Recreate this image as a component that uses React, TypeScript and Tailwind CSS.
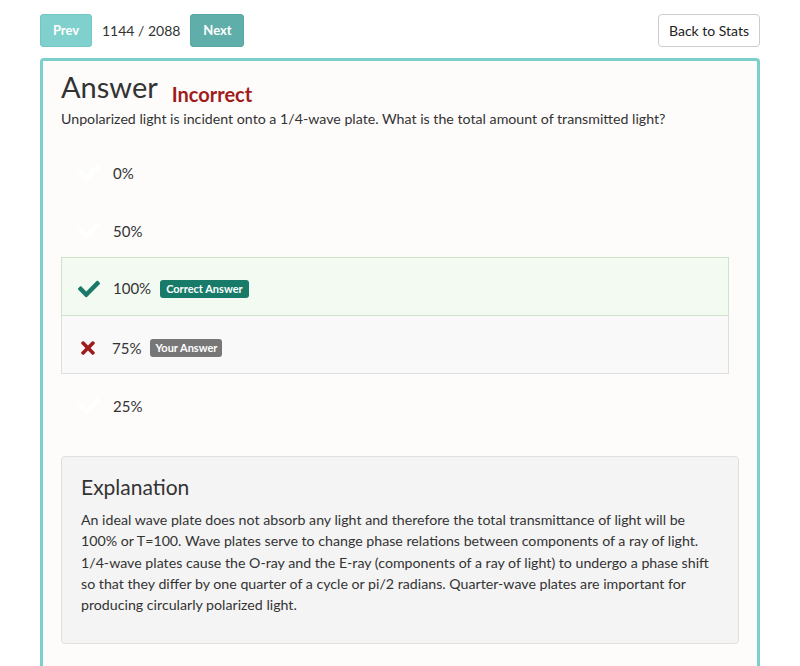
import { FaCheck, FaTimes } from 'react-icons/fa';

type Option = {
  label: string;
  status?: 'correct' | 'yours';
};

const OPTIONS: Option[] = [
  { label: '0%' },
  { label: '50%' },
  { label: '100%', status: 'correct' },
  { label: '75%', status: 'yours' },
  { label: '25%' },
];

function OptionRow({ option }: { option: Option }) {
  if (option.status === 'correct') {
    return (
      <div className="flex h-[59px] items-center border border-[#cfe3cb] bg-[#f3faf2] pl-[16px] pt-[4px]">
        <FaCheck className="h-[22px] w-[22px] text-[#1a7a6a]" />
        <span className="ml-[13px] text-[15px] text-[#333]">{option.label}</span>
        <span className="ml-[9px] rounded-[3px] bg-[#187a68] px-[6px] py-[2px] text-[11px] font-bold leading-[14px] text-white">
          Correct Answer
        </span>
      </div>
    );
  }
  if (option.status === 'yours') {
    return (
      <div className="flex h-[58px] items-center border border-t-0 border-[#dedede] bg-[#f9f9f9] pl-[17px] pt-[7px]">
        <FaTimes className="h-[20px] w-[18px] text-[#9e1c1c]" />
        <span className="ml-[15px] text-[15px] text-[#333]">{option.label}</span>
        <span className="ml-[9px] rounded-[3px] bg-[#777] px-[5px] py-[2px] text-[11px] font-bold leading-[14px] text-white">
          Your Answer
        </span>
      </div>
    );
  }
  return (
    <div className="flex h-[58px] items-center pl-[17px] pt-[6px]">
      <FaCheck className="h-[22px] w-[22px] text-white" />
      <span className="ml-[13px] text-[15px] text-[#333]">{option.label}</span>
    </div>
  );
}

export default function App() {
  return (
    <div
      className="min-h-[666px] bg-white px-[40px] pt-[14px] text-[#333]"
      style={{ fontFamily: 'Lato, "Open Sans", sans-serif' }}
    >
      {/* Top nav */}
      <div className="flex h-[33px] items-center justify-between">
        <div className="flex items-center">
          <button className="h-[33px] w-[52px] rounded-[3px] border border-[#72c6c3] bg-[#80d0cd] text-[13px] font-bold text-white">
            Prev
          </button>
          <span className="ml-[10px] text-[14px] text-[#333]">1144 / 2088</span>
          <button className="ml-[10px] h-[33px] w-[54px] rounded-[3px] border border-[#59a7a3] bg-[#5faeaa] text-[13px] font-bold text-white">
            Next
          </button>
        </div>
        <button className="h-[33px] w-[102px] rounded-[4px] border border-[#cccccc] bg-white text-[14px] text-[#222]">
          Back to Stats
        </button>
      </div>

      {/* Answer panel */}
      <div className="mt-[11px] h-[620px] rounded-t-[4px] border-[3px] border-b-0 border-[#7dcfcc] bg-[#fdfcfb] px-[18px] pt-[6px]">
        <div className="flex items-baseline">
          <h1 className="text-[29px] leading-[40px] text-[#333]">Answer</h1>
          <span className="ml-[14px] translate-y-[4px] text-[20px] font-bold text-[#a11b1b]">Incorrect</span>
        </div>
        <p className="mt-[2px] text-[14.2px] leading-[20px] text-[#333]">
          Unpolarized light is incident onto a 1/4-wave plate. What is the total amount of transmitted light?
        </p>

        <div className="mt-[12px] w-[668px]">
          {OPTIONS.map((o) => (
            <OptionRow key={o.label} option={o} />
          ))}
        </div>

        <div className="mt-[24px] h-[188px] w-[678px] rounded-[4px] border border-[#e0e0e0] bg-[#f4f4f4] px-[19px] pt-[16px]">
          <h2 className="text-[21px] leading-[28px] text-[#333]">Explanation</h2>
          <p className="mt-[8px] text-[14.2px] leading-[21.3px] text-[#333]">
            An ideal wave plate does not absorb any light and therefore the total transmittance of light will be
            100% or T=100. Wave plates serve to change phase relations between components of a ray of light.
            1/4-wave plates cause the O-ray and the E-ray (components of a ray of light) to undergo a phase shift
            so that they differ by one quarter of a cycle or pi/2 radians. Quarter-wave plates are important for
            producing circularly polarized light.
          </p>
        </div>
      </div>
    </div>
  );
}
